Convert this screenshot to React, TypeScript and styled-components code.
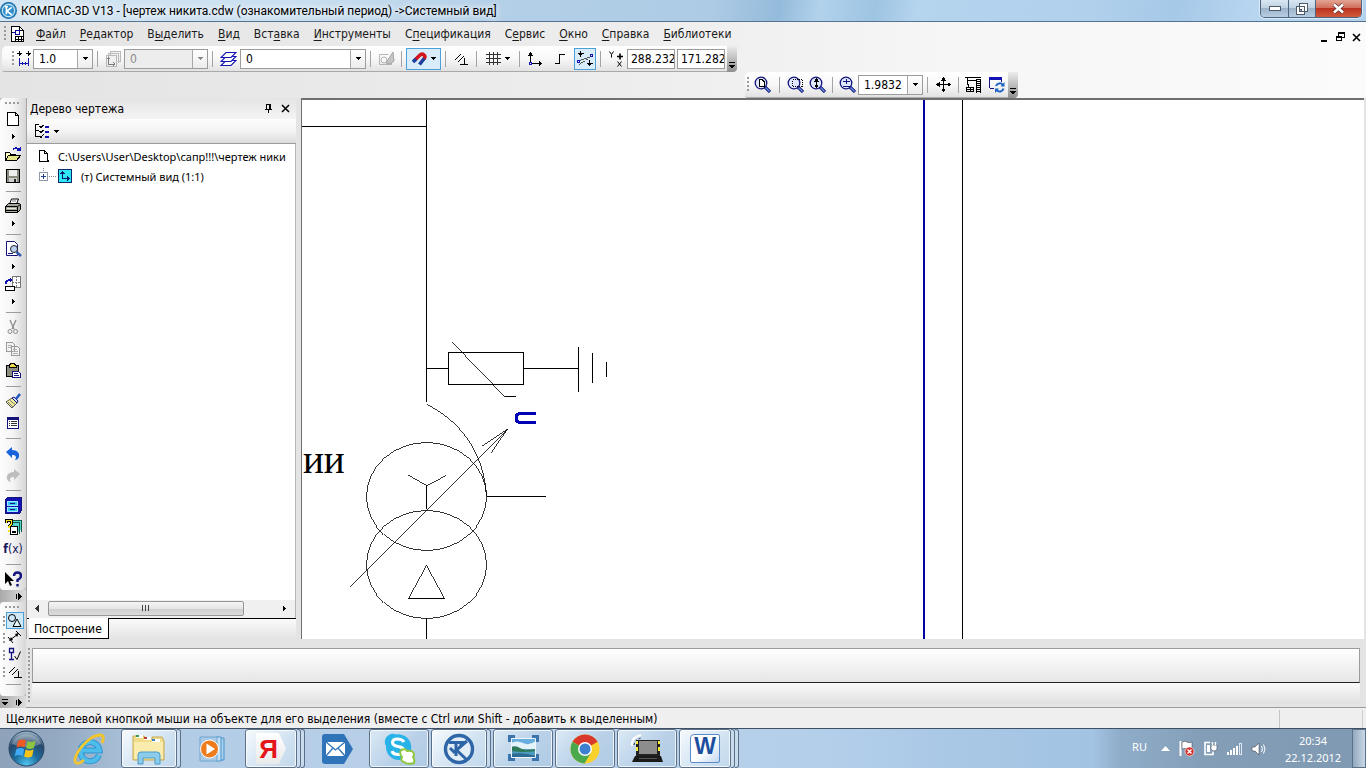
import React from "react";
import styled, { createGlobalStyle, css } from "styled-components";

const UI = 'Roboto, "Noto Sans", sans-serif';
const SMALL = '"Noto Sans", "Open Sans", sans-serif';
const TAHOMA = '"DejaVu Sans Condensed", "DejaVu Sans", sans-serif';

const Global = createGlobalStyle`
  *, *::before, *::after { box-sizing: border-box; }
  html, body { margin: 0; padding: 0; height: 100%; }
  #root { height: 100%; }
  body { font-family: ${UI}; font-size: 12px; color: #000; background: #ebebeb; overflow: hidden; }
  button, input, select { font: inherit; color: inherit; margin: 0; padding: 0; border: 0; background: none; border-radius: 0; }
  svg { display: block; flex: none; }
`;

/* ---------- shell ---------- */

const Shell = styled.div`
  display: flex;
  flex-direction: column;
  min-height: 100vh;
`;

const TitleBar = styled.header`
  display: flex;
  align-items: flex-start;
  height: 22px;
  padding-right: 4px;
  border-bottom: 1px solid #56728f;
  background: linear-gradient(100deg, #d4e6f3 0, #c9dff0 22%, #b4d0e8 36%, #aecbe5 52%, #94bbdb 57%, #b2d2ec 60%, #9dc4e2 64%, #b5d4ee 67%, #b0d0ec 80%, #a6c9e8 86%, #b9d6f0 92%, #b2d1ec 100%);
  > svg { align-self: center; }
`;

const TitleText = styled.h1`
  flex: 1;
  margin: 0 0 0 4px;
  font-size: 12px;
  font-weight: 400;
  line-height: 22px;
  white-space: nowrap;
  text-shadow: 0 0 6px #fff, 0 0 6px #fff;
`;

const CaptionGroup = styled.div`
  display: flex;
  height: 18px;
  border: 1px solid #4d6580;
  border-top: 0;
  border-radius: 0 0 5px 5px;
  overflow: hidden;
  box-shadow: 0 0 0 1px rgba(255, 255, 255, 0.5);
`;

const CaptionButton = styled.button<{ $close?: boolean }>`
  display: grid;
  place-items: center;
  width: ${(p) => (p.$close ? 46 : 27)}px;
  background: ${(p) =>
    p.$close
      ? "linear-gradient(#e3a493 0, #d2705c 45%, #bc3220 50%, #cf5a3c 100%)"
      : "linear-gradient(#d9e6f2 0, #c0d2e3 45%, #9db3c9 50%, #b7cde2 100%)"};
  & + & { border-left: 1px solid #4d6580; }
`;

const CommandArea = styled.div`
  background: linear-gradient(90deg, #e4e4e4 0, #ededed 45%, #f6f6f6 70%, #fbfbfb 100%);
`;

const MenuBar = styled.nav`
  display: flex;
  align-items: center;
  height: 24px;
  padding: 0 4px;
  font-family: ${TAHOMA};
`;

const MenuItem = styled.a`
  margin-left: 14px;
  line-height: 24px;
  color: #1a1a1a;
  text-decoration: none;
  white-space: nowrap;
  &:first-of-type { margin-left: 11px; }
  u { text-underline-offset: 2px; }
`;

const MdiButtons = styled.div`
  display: flex;
  gap: 5px;
  margin-left: auto;
  padding-top: 6px;
`;

const PlainButton = styled.button`
  display: grid;
  place-items: center;
  min-width: 11px;
  height: 12px;
`;

const DocButton = styled.button`
  margin-left: 3px;
`;

/* ---------- toolbars ---------- */

const ToolRow = styled.div<{ $indent: number }>`
  display: flex;
  height: 26px;
  padding-left: ${(p) => p.$indent}px;
`;

const Toolbar = styled.div<{ $pad: number }>`
  display: flex;
  align-items: center;
  padding-left: ${(p) => p.$pad}px;
  border-bottom: 1px solid #a9a9a9;
  border-radius: 5px 0 0 3px;
  background: linear-gradient(#ffffff 0, #f8f8f8 50%, #e2e2e2 100%);
`;

const Grip = styled.i<{ $wide?: boolean; $tall?: boolean }>`
  flex: none;
  align-self: ${(p) => (p.$tall ? "stretch" : "center")};
  width: ${(p) => (p.$wide ? 16 : 2)}px;
  height: ${(p) => (p.$wide ? "2px" : p.$tall ? "auto" : "16px")};
  background: repeating-linear-gradient(${(p) => (p.$wide ? "90deg" : "180deg")}, #9a9a9a 0 2px, transparent 2px 4px);
`;

const ToolButton = styled.button<{ $on?: boolean; $w?: number; $dim?: boolean }>`
  display: flex;
  align-items: center;
  justify-content: center;
  gap: 4px;
  flex: none;
  width: ${(p) => p.$w ?? 22}px;
  height: 22px;
  opacity: ${(p) => (p.$dim ? 0.75 : 1)};
  ${(p) => p.$on && css`border: 1px solid #4ba0d8; background: #d8ecf9;`}
`;

const Sep = styled.span`
  flex: none;
  width: 1px;
  height: 16px;
  margin: 0 4px;
  background: #a4a4a4;
`;

const Combo = styled.label<{ $w: number; $off?: boolean }>`
  display: grid;
  grid-template-columns: 1fr 15px;
  flex: none;
  width: ${(p) => p.$w}px;
  height: 20px;
  border: 1px solid #9c9c9c;
  background: ${(p) => (p.$off ? "#ededed" : "#fff")};
  color: ${(p) => (p.$off ? "#8a8a8a" : "#000")};
  select {
    grid-area: 1 / 1 / 2 / 3;
    min-width: 0;
    padding-left: 5px;
    appearance: none;
    outline: 0;
    font-family: ${TAHOMA};
    opacity: 1;
  }
  span {
    grid-area: 1 / 2 / 2 / 3;
    display: grid;
    place-items: center;
    border-left: 1px solid #a8a8a8;
    background: linear-gradient(#fff, #ececec);
    pointer-events: none;
  }
`;

const Coord = styled.input`
  flex: none;
  width: 48px;
  height: 20px;
  margin-right: 2px;
  padding-left: 3px;
  border: 1px solid #9c9c9c;
  background: #fff;
  font-family: ${TAHOMA};
`;

const EndCap = styled.button`
  display: flex;
  align-items: flex-end;
  justify-content: center;
  align-self: stretch;
  width: 10px;
  padding-bottom: 3px;
  border-radius: 0 0 4px 0;
  background: linear-gradient(#ececec, #8f8f8f);
`;

/* ---------- work area ---------- */

const Work = styled.div`
  display: flex;
  flex: 1;
  min-height: 0;
`;

const Strip = styled.aside`
  display: flex;
  flex-direction: column;
  width: 26px;
  flex: none;
  background: #b9b9b9;
`;

const StripBar = styled.div<{ $grow?: boolean }>`
  display: flex;
  flex-direction: column;
  align-items: center;
  flex: ${(p) => (p.$grow ? 1 : "none")};
  border-radius: 4px 0 4px 4px;
  background: linear-gradient(90deg, #fdfdfd 0, #f4f4f4 50%, #d6d6d6 100%);
`;

const StripGrip = styled.div`
  display: grid;
  place-items: center;
  width: 100%;
  height: 10px;
`;

const StripButton = styled.button<{ $h?: number }>`
  display: grid;
  place-items: center;
  width: 22px;
  height: ${(p) => p.$h ?? 22}px;
`;

const ModeButton = styled.button<{ $on?: boolean }>`
  display: flex;
  align-items: center;
  gap: 1px;
  width: 21px;
  height: 17px;
  i { height: 10px; }
  span {
    display: grid;
    place-items: center;
    width: 18px;
    height: 17px;
    border: 1px solid ${(p) => (p.$on ? "#4ba0d8" : "transparent")};
    background: ${(p) => (p.$on ? "#cfe8f8" : "none")};
  }
`;

const StripSep = styled.div`
  display: grid;
  place-items: center;
  height: 8px;
  &::before { content: ""; width: 15px; height: 1px; background: #9c9c9c; }
`;

const StripCap = styled.button`
  display: flex;
  align-items: center;
  justify-content: flex-end;
  gap: 8px;
  flex: none;
  height: 12px;
  padding-right: 4px;
  background: linear-gradient(90deg, #a9a9a9, #dcdcdc);
`;

const Main = styled.div`
  display: flex;
  flex-direction: column;
  flex: 1;
  min-width: 0;
  background: #e4e4e4;
`;

const Upper = styled.div`
  display: flex;
  flex: 1;
  min-height: 0;
  gap: 5px;
`;

const TreePanel = styled.section`
  display: flex;
  flex-direction: column;
  flex: none;
  width: 270px;
  border-left: 1px solid #a5a5a5;
`;

const TreeHead = styled.div`
  display: flex;
  align-items: center;
  gap: 6px;
  height: 21px;
  padding: 0 5px 0 3px;
  background: linear-gradient(#e4e4e4, #f4f4f4);
  h2 {
    flex: 1;
    margin: 0;
    font-size: 12px;
    font-weight: 400;
    font-family: ${TAHOMA};
  }
`;

const TreeTools = styled.div`
  display: flex;
  align-items: center;
  height: 25px;
  padding-left: 5px;
  border-bottom: 1px solid #9b9b9b;
  background: linear-gradient(#fdfdfd, #f4f4f4 50%, #dcdcdc);
`;

const TreeList = styled.ul`
  flex: 1;
  margin: 0;
  padding: 2px 2px 0 11px;
  border-right: 1px solid #b5b5b5;
  list-style: none;
  background: #fff;
  font-family: ${SMALL};
  font-size: 11px;
`;

const TreeItem = styled.li`
  display: flex;
  align-items: center;
  gap: 9px;
  height: 20px;
  white-space: nowrap;
  overflow: hidden;
`;

const HScroll = styled.div`
  display: flex;
  align-items: center;
  justify-content: space-between;
  height: 18px;
  padding: 0 9px 2px 8px;
  border-right: 1px solid #b5b5b5;
  background: #f0f0f0;
`;

const Thumb = styled.div`
  display: grid;
  place-items: center;
  width: 196px;
  height: 15px;
  margin-right: auto;
  margin-left: 9px;
  border: 1px solid #979797;
  border-radius: 2px;
  background: linear-gradient(#f4f4f4 0, #e6e6e6 50%, #d0d0d0 55%, #dcdcdc 100%);
`;

const TabRow = styled.div`
  display: flex;
  height: 21px;
  padding-left: 2px;
  border-top: 1px solid #000;
  background: linear-gradient(#fafafa, #e4e4e4);
`;

const Tab = styled.button`
  margin-top: -1px;
  padding: 0 6px 0 5px;
  border: solid #000;
  border-width: 0 1px 1px 0;
  background: #fff;
  font-family: ${TAHOMA};
  font-size: 12px;
  line-height: 22px;
`;

const Canvas = styled.main`
  flex: 1;
  min-width: 0;
  margin-right: 2px;
  border: solid #6f6f6f;
  border-width: 2px 0 0 1px;
  background: #fff;
  overflow: hidden;
  position: relative;
`;

const PropPanel = styled.section`
  display: flex;
  gap: 2px;
  height: 69px;
  padding: 9px 6px 3px 2px;
  border-bottom: 1px solid #9c9c9c;
`;

const PropBody = styled.div`
  flex: 1;
`;

const PropBox = styled.div`
  height: 35px;
  border: solid #9c9c9c;
  border-width: 1px 1px 0 1px;
  border-bottom: 1px solid #222;
  background: linear-gradient(#fff, #e6e6e6);
`;

const PropFoot = styled.div`
  height: 21px;
  background: linear-gradient(#fafafa, #e0e0e0);
`;

const StatusBar = styled.footer`
  display: flex;
  height: 20px;
  padding: 2px 3px 0 6px;
  background: #f0eff0;
  font-family: ${TAHOMA};
  line-height: 19px;
  white-space: nowrap;
  p { flex: 1; margin: 0; }
  span { width: 84px; border-left: 1px solid #c4c4c4; border-right: 1px solid #d0d0d0; }
`;

/* ---------- taskbar ---------- */

const Taskbar = styled.footer`
  display: flex;
  gap: 2px;
  height: 40px;
  border-top: 1px solid #3f5064;
  background: linear-gradient(90deg, #8ea2ba 0, #93a8c1 4%, #b3cce5 12%, #bad2ea 40%, #b4cfea 60%, #a9c8e6 70%, #a3c3e3 80%, #8fadc9 82%, #849eb8 88%, #7f99b2 100%);
`;

const StartButton = styled.button`
  width: 57px;
  padding-left: 8px;
`;

const TaskSlot = styled.button<{ $run?: boolean; $active?: boolean }>`
  display: flex;
  width: 60px;
  > span {
    display: grid;
    place-items: center;
    flex: 1;
    height: 39px;
    ${(p) =>
      p.$run &&
      css`
        border: 1px solid #5b7088;
        border-radius: 3px;
        box-shadow: inset 0 0 0 1px rgba(255, 255, 255, 0.75);
        background: ${p.$active
          ? "linear-gradient(135deg, #f6fafd, #d0e2f1 60%, #c1d8ec)"
          : "linear-gradient(135deg, #dbe9f5, #b9d1e8 55%, #b0cbe5)"};
      `}
  }
  > i {
    width: 4px;
    height: 39px;
    border: solid #5b7088;
    border-width: 1px 1px 1px 0;
    border-radius: 0 3px 3px 0;
    background: #c9dcee;
  }
`;

const Tray = styled.div`
  display: flex;
  align-items: center;
  margin-left: auto;
  color: #fff;
`;

const TrayItems = styled.div`
  display: flex;
  align-items: center;
  gap: 8px;
  margin-right: 18px;
`;

const Lang = styled.span`
  margin-right: 6px;
  margin-bottom: 5px;
  font-family: ${SMALL};
  font-size: 11px;
`;

const Clock = styled.time`
  width: 58px;
  margin-right: 10px;
  text-align: center;
  font-family: ${SMALL};
  font-size: 11px;
  line-height: 17px;
`;

const ShowDesktop = styled.button`
  width: 14px;
  height: 39px;
  border: 1px solid #5a7189;
  background: linear-gradient(90deg, #93a9bf, #c9d8e6);
`;

/* ---------- small glyphs ---------- */

type IconProps = { w?: number; h?: number; smooth?: boolean; children: React.ReactNode };
const Icon = ({ w = 16, h = 16, smooth, children }: IconProps) => (
  <svg width={w} height={h} viewBox={`0 0 ${w} ${h}`} fill="none" stroke="#000" shapeRendering={smooth ? "auto" : "crispEdges"} aria-hidden="true">
    {children}
  </svg>
);

const Down = ({ c = "#000" }: { c?: string }) => (
  <Icon w={5} h={3}><path d="M0 0h5L2.500 3z" fill={c} stroke="none" /></Icon>
);
const Right = () => (
  <Icon w={3} h={5}><path d="M0 0v5L3 2.500z" fill="#000" stroke="none" /></Icon>
);
const Left = () => (
  <Icon w={4} h={7}><path d="M4 0v7L0 3.500z" fill="#333" stroke="none" /></Icon>
);
const CapDown = () => (
  <Icon w={6} h={7}><path d="M0 .5h6" /><path d="M0 3h6L3 6.500z" fill="#000" stroke="none" /></Icon>
);
const CapRight = () => (
  <Icon w={6} h={7}><path d="M.5 1v5" /><path d="M2 0v7L6 3.500z" fill="#000" stroke="none" /></Icon>
);

const TitleMark = () => (
  <svg width="17" height="17" viewBox="0 0 32 32" fill="none" aria-hidden="true">
    <circle cx="16" cy="16" r="15" fill="#2f8fcb" stroke="#1f6da5" strokeWidth="2" />
    <circle cx="16" cy="16" r="11.500" stroke="#cfe6f5" strokeWidth="2" />
    <path d="M12 9v14M9 9h6M22 10l-9 7 9 7" stroke="#fff" strokeWidth="3" />
  </svg>
);

const KompasMark = () => (
  <svg width="32" height="32" viewBox="0 0 32 32" fill="none" aria-hidden="true">
    <circle cx="16" cy="16" r="13.500" fill="#e3edf6" stroke="#2e66a8" strokeWidth="3.400" />
    <path d="M6 9.500h16M13 9v14" stroke="#2e66a8" strokeWidth="3" />
    <path d="M24 8L13.500 17 23 26M7 15l5 5" stroke="#2e66a8" strokeWidth="3" />
    <path d="M17.500 9.500v5" stroke="#2e66a8" strokeWidth="2" />
  </svg>
);

const DocIcon = () => (
  <Icon><path d="M2.500 .5h8l4 4v11h-12z" fill="#fff" /><path d="M10.500 .5v4h4" /><path d="M3 6.500h3M6.500 4.500h4v4h-4z" stroke="#0a0aa0" /><path d="M6.500 10.500h8v5h-8zM6 13h9M9.500 10v5M12.500 10v5" /></Icon>
);

/* toolbar */
const StepIcon = () => (
  <Icon><path d="M3.500 0v5M1 2.500h5M12.500 0v5M10 2.500h5" /><path d="M2.500 1.500h2v2h-2zM11.500 1.500h2v2h-2z" fill="#000" stroke="none" /><path d="M3.500 7v8M12.500 7v8M4 12.500h8M6.500 11v3M9.500 11v3" stroke="#1414b4" /></Icon>
);
const ViewsIcon = () => (
  <Icon><path d="M5.500 3.500v-3h10v10h-3M3.500 5.500v-3h10v9M1.500 4.500h10v11h-10z" stroke="#a5a5a5" fill="#eee" /><path d="M3.500 7v6h6M1.500 8.500l2-2 2 2M8 11l2 2-2 2" stroke="#555" /></Icon>
);
const LayersIcon = () => (
  <Icon w={17} smooth>
    <g stroke="#1414b4" strokeWidth="1.100" fill="#fff">
      <path d="M6 9.500h10l-5 5H1z" /><path d="M6 5.500h10l-5 5H1z" /><path d="M6 1.500h10l-5 5H1z" />
    </g>
  </Icon>
);
const SketchIcon = () => (
  <Icon w={17} smooth><path d="M1.500 3.500h9M1.500 3.500v10h12v-3" stroke="#a0a0a0" /><circle cx="6" cy="9" r="3" stroke="#a0a0a0" /><path d="M15 1l1 9-4 3-4-1z" fill="#b5b5b5" stroke="#8a8a8a" /></Icon>
);
const MagnetIcon = () => (
  <Icon smooth>
    <path d="M3.500 9.500l5-5c3-3 7 0 4.500 3.500" stroke="#d2161b" strokeWidth="3.600" />
    <path d="M13.200 7.500L8.500 13.500" stroke="#1c3f9f" strokeWidth="3.600" /><path d="M5 8l-3 3" stroke="#1c3f9f" strokeWidth="3.600" />
  </Icon>
);
const ParallelIcon = () => (
  <Icon w={14} h={14} smooth><path d="M1 8l6-6M4 10l6-6" /><path d="M6 12.500h8M10.500 6v6" shapeRendering="crispEdges" /></Icon>
);
const GridIcon = () => (
  <Icon w={15} h={13}><path d="M0 2.500h15M0 6.500h15M0 10.500h15M3.500 0v13M7.500 0v13M11.500 0v13" stroke="#333" /></Icon>
);
const AxesIcon = () => (
  <Icon><path d="M3.500 2v10M4 12.500h10" /><path d="M1 4.500L3.500 1 6 4.500zM12 10l3.500 2.500L12 15z" fill="#000" stroke="none" /><path d="M2.500 11.500h2v2h-2z" stroke="#1414b4" /></Icon>
);
const OrthoIcon = () => (
  <Icon w={12} h={12}><path d="M1 10.500h4.500v-9H11" /></Icon>
);
const RoundIcon = () => (
  <Icon w={18}><path d="M4.500 0v6M2 2.500h6M13.500 9v6M11 12.500h6" /><path d="M3.500 2.500h2v1h-2zM12.500 12.500h2v1h-2z" fill="#000" /><path d="M2.500 9.500L15 5.500" stroke="#333" strokeWidth=".8" /><path d="M3 13.500L12 8" stroke="#333" strokeWidth=".8" strokeDasharray="3 1" /><path d="M14.500 3.500h2v2h-2zM1.500 9.500h2v2h-2z" stroke="#1414b4" /></Icon>
);
const XYIcon = () => (
  <Icon w={17} smooth><path d="M1.500 .5l2 3 2-3M3.500 3.500v3M9.500 10.500l4 5M13.500 10.500l-4 5" /><path d="M9 5.500h6M12 2.500v6" strokeWidth="1.600" /></Icon>
);

const Lens = ({ children }: { children: React.ReactNode }) => (
  <Icon w={17} h={17} smooth>
    <circle cx="7" cy="7" r="5.800" fill="#dfe9fb" stroke="#14147c" strokeWidth="1.300" />
    <path d="M11 11l5 5" stroke="#14147c" strokeWidth="3.200" /><path d="M11.500 11.500l4 4" stroke="#5f8fe0" strokeWidth="1.400" />
    <g shapeRendering="crispEdges">{children}</g>
  </Icon>
);
const ZoomPage = () => <Lens><path d="M5.500 3.500h2.500l2 2v4.500h-4.500z" fill="#fff" /></Lens>;
const ZoomArea = () => <Lens><path d="M5.500 3.500h10v7h-10z" strokeDasharray="1 1" /></Lens>;
const ZoomDyn = () => <Lens><path d="M7.500 3v9" /><path d="M5 5.500L7.500 2 10 5.500zM5 8.500L7.500 12 10 8.500z" fill="#000" stroke="none" /></Lens>;
const ZoomPM = () => <Lens><path d="M4 5.500h7M7.500 3v5M4 10.500h7" stroke="#14147c" /></Lens>;
const PanIcon = () => (
  <Icon w={15} h={15}><path d="M7.500 2v11M2 7.500h11" /><path d="M5 3.500L7.500 0 10 3.500zM5 11.500L7.500 15 10 11.500zM3.500 5L0 7.500 3.500 10zM11.500 5L15 7.500 11.500 10z" fill="#000" stroke="none" /></Icon>
);
const CraneIcon = () => (
  <Icon w={17} h={17}><path d="M0 1.500h16M2.500 2v6M3 4.500h8" /><path d="M11.500 2.500v14M15.500 2.500v14M1.500 11.500h7v4h-7zM5 11v5M1 13.500h8M1.500 8.500h2v2" /><path d="M13.500 3v14" strokeWidth="3" strokeDasharray="1 1" /></Icon>
);
const RefreshIcon = () => (
  <Icon w={17} h={17} smooth><path d="M1.500 12V1.500h12V6M1.500 12H6" stroke="#14147c" shapeRendering="crispEdges" /><path d="M1 1h13v3H1z" fill="#1414b4" stroke="none" /><path d="M8 10a4 4 0 0 1 7-1M15.500 12.500a4 4 0 0 1-7 1.500" stroke="#1d63c4" strokeWidth="2" /><path d="M16.500 6v4.500h-4zM7 17v-4.500h4z" fill="#1d63c4" stroke="none" /></Icon>
);

/* side strip */
const NewIcon = () => <Icon w={15}><path d="M1.500 1.500h8l3 3v10h-11z" fill="#fff" /><path d="M9.500 1.500v3h3" /></Icon>;
const OpenIcon = () => (
  <Icon><path d="M.5 14.500v-8h4l1 1.500h5v2" fill="#ffffb8" /><path d="M.5 14.500l3-5h12l-4 5z" fill="#e6e58a" /><path d="M8 3.500q3-3 6 .5" stroke="#1414b4" strokeWidth="1.600" /><path d="M11.500 4.500h4v-4z" fill="#1414b4" stroke="none" /></Icon>
);
const SaveIcon = () => (
  <Icon><path d="M1.500 1.500h13v13h-13z" fill="#8b8b80" /><path d="M4 2h8v6H4z" fill="#eee" stroke="none" /><path d="M4 10h8v4H4z" fill="#cfcfcf" stroke="none" /><path d="M9 11h2v3H9z" fill="#222" stroke="none" /></Icon>
);
const PrintIcon = () => (
  <Icon smooth><path d="M4.500 6l2-5h7l-2 5" fill="#fff" /><path d="M.5 8.500l3-3h11l1 1v5l-3 3h-12z" fill="#a8a89c" /><path d="M.5 8.500h12l3-2M12.500 8.500v6M1 12.500h11" /><path d="M7 3h4" stroke="#777" /><path d="M2 10.500h9" stroke="#e8e8d8" /></Icon>
);
const PreviewIcon = () => (
  <Icon w={17} smooth><path d="M1.500 .5h8l3 3v11h-11z" fill="#fff" stroke="#14147c" /><circle cx="9" cy="8" r="3.500" fill="#bcd2f5" stroke="#222" /><path d="M11.500 11l4.500 4" stroke="#2f57b0" strokeWidth="2.500" /><path d="M3 12.500h5" stroke="#14147c" /></Icon>
);
const ConvertIcon = () => (
  <Icon w={17}><path d="M7.500 .5h8v11h-8z" fill="#fff" stroke="#777" /><path d="M11.500 0v12M7 6.500h9" stroke="#777" strokeDasharray="2 1" /><path d="M.5 10.500h9v4h-9z" fill="#fff" /><path d="M1 8q0-4 4-4" stroke="#1414b4" strokeWidth="2" /><path d="M4.500 1v6l3.500-3z" fill="#1414b4" stroke="none" /></Icon>
);
const CutIcon = () => (
  <Icon smooth><path d="M5 1l4 9M11 1L7 10" stroke="#8b8b8b" strokeWidth="1.300" /><circle cx="5" cy="12.500" r="2" stroke="#8b8b8b" /><circle cx="10.500" cy="12.500" r="2" stroke="#8b8b8b" /></Icon>
);
const CopyIcon = () => (
  <Icon><path d="M1.500 1.500h6l2 2v7h-8zM6.500 5.500h6l2 2v7h-8z" stroke="#9a9a9a" fill="#f2f2f2" /><path d="M3 4.500h4M3 6.500h3M8 8.500h4M8 10.500h5M8 12.500h5" stroke="#b0b0b0" /></Icon>
);
const PasteIcon = () => (
  <Icon><path d="M1.500 2.500h12v11h-12z" fill="#8d8d80" /><path d="M4 4.500V2.500l2-2h3l2 2v2z" fill="#f2dc4a" /><path d="M7.500 8.500h6l2 2v4h-8z" fill="#fff" stroke="#14147c" /><path d="M9 10.500h4M9 12.500h5" stroke="#14147c" /></Icon>
);
const BrushIcon = () => (
  <Icon smooth><path d="M1 9l6-4 5 5-5 5z" fill="#f1ee9a" stroke="#555" /><path d="M3 9l5 5M5 7.500l5 4" stroke="#777" /><path d="M7 5l2-1 4 4-1 2z" fill="#cfe0f8" stroke="#14147c" /><path d="M11 6l4-5" stroke="#2257c0" strokeWidth="2.600" /></Icon>
);
const TableIcon = () => (
  <Icon w={14} h={14}><path d="M1.500 1.500h11v11h-11z" fill="#fff" stroke="#14147c" /><path d="M1 2.500h12" stroke="#14147c" strokeWidth="2" /><path d="M3 5.500h1M5 5.500h6M3 7.500h1M5 7.500h6M3 9.500h1M5 9.500h6" stroke="#333" /></Icon>
);
const UndoIcon = () => (
  <Icon w={14} h={15} smooth><path d="M0 6l6-5v3c5 0 8 3 7 7-1 2-2 3-4 3 2-3 1-5-3-5v3z" fill="#1763dc" stroke="none" /></Icon>
);
const RedoIcon = () => (
  <Icon w={14} h={15} smooth><path d="M14 6L8 1v3C3 4 0 7 1 11c1 2 2 3 4 3-2-3-1-5 3-5v3z" fill="#bdbdbd" stroke="none" /></Icon>
);
const CabinetIcon = () => (
  <Icon w={17} h={17}><path d="M.5 2.500l2-2h14v13l-2 3h-14z" fill="#1414b4" stroke="#14147c" /><path d="M2.500 4.500h10v4h-10zM2.500 10.500h10v4h-10z" fill="#35c8ee" stroke="#9feaff" /><path d="M5 6.500h5M5 12.500h5" stroke="#14147c" /></Icon>
);
const ParamIcon = () => (
  <Icon w={17} h={17}><path d="M6.500 1.500h10v11M4.500 3.500h10v11" fill="#57d5d5" stroke="#14553f" /><path d="M5.500 7.500h7v8h-7zM7 13h4" fill="#fff" strokeWidth="1.500" /><path d="M1.500 4V1.500h5V5L4 7.500V9M4 11v2" stroke="#000" strokeWidth="3" /><path d="M1.500 4V1.500h5V5L4 7.500V9M4 11v2" stroke="#f6e51d" strokeWidth="1.500" /></Icon>
);
const HelpIcon = () => (
  <Icon w={18} h={17} smooth><path d="M1 1v12l3-3 2 5 2-1-2-4h4z" fill="#000" stroke="none" /><path d="M10 5q0-3.500 3.500-3.500T17 5q0 2-3.500 4v2M13.500 13v2.500" stroke="#14147c" strokeWidth="2.400" /></Icon>
);
const FxLabel = styled.span`
  font-family: ${TAHOMA};
  font-size: 12px;
  line-height: 16px;
  color: #14145c;
  b { font-weight: 700; }
`;
const GeomIcon = () => <Icon w={15} h={15} smooth><circle cx="5" cy="5" r="3.500" /><path d="M10 6l4 7.500H6z" fill="#e6f3fc" /></Icon>;
const DimIcon = () => <Icon w={15} h={15} smooth><path d="M3 10l8-6M1 7l5 6M9 1l5 5" /><path d="M2 11l2-4 2 3zM12 3L8 4l2 3z" fill="#000" stroke="none" /></Icon>;
const NoteIcon = () => <Icon w={15} h={15} smooth><path d="M2.500 1.500h4v4h-4zM4.500 6v6M2 12.500h5" stroke="#14147c" strokeWidth="1.300" /><path d="M7.500 9l2.500 3.500 3.500-8" /></Icon>;

const modes: [string, React.ReactNode][] = [
  ["Геометрия", <GeomIcon />],
  ["Размеры", <DimIcon />],
  ["Обозначения", <NoteIcon />],
  ["Параметризация", <ParallelIcon />],
];

/* ---------- data ---------- */

const menu: [string, string, string][] = [
  ["", "Ф", "айл"],
  ["", "Р", "едактор"],
  ["В", "ы", "делить"],
  ["", "В", "ид"],
  ["Вст", "а", "вка"],
  ["", "И", "нструменты"],
  ["С", "п", "ецификация"],
  ["С", "е", "рвис"],
  ["", "О", "кно"],
  ["", "С", "правка"],
  ["", "Б", "иблиотеки"],
];

type StripEntry = { kind: "sep" } | { kind: "more"; label: string } | { kind: "tool"; label: string; icon: React.ReactNode };
const tool = (label: string, icon: React.ReactNode): StripEntry => ({ kind: "tool", label, icon });
const more = (label: string): StripEntry => ({ kind: "more", label });
const sep: StripEntry = { kind: "sep" };

const strip: StripEntry[] = [
  tool("Создать", <NewIcon />), more("Создать: варианты"),
  tool("Открыть", <OpenIcon />), tool("Сохранить", <SaveIcon />), sep,
  tool("Печать", <PrintIcon />), more("Печать: варианты"), sep,
  tool("Просмотр", <PreviewIcon />), more("Просмотр: варианты"),
  tool("Преобразовать", <ConvertIcon />), more("Преобразовать: варианты"), sep,
  tool("Вырезать", <CutIcon />), tool("Копировать", <CopyIcon />), tool("Вставить", <PasteIcon />), sep,
  tool("Копировать свойства", <BrushIcon />), tool("Свойства", <TableIcon />), sep,
  tool("Отменить", <UndoIcon />), tool("Повторить", <RedoIcon />), sep,
  tool("Менеджер библиотек", <CabinetIcon />), tool("Менеджер шаблонов", <ParamIcon />),
  tool("Переменные", <FxLabel><b>f</b>(x)</FxLabel>), sep,
  tool("Справка", <HelpIcon />),
];

const Select = ({ label, value, w, off }: { label: string; value: string; w: number; off?: boolean }) => (
  <Combo $w={w} $off={off}>
    <select aria-label={label} disabled={off} defaultValue={value}>
      <option>{value}</option>
    </select>
    <span><Down c={off ? "#888" : "#000"} /></span>
  </Combo>
);

/* ---------- drawing ---------- */

const Sheet = styled.svg`
  position: absolute;
  inset: 0;
  width: 100%;
  height: 100%;
`;

const Scheme = () => (
  <Sheet role="img" aria-label="Схема трансформатора">
    <g transform="translate(-302 -100)" stroke="#000" fill="none" shapeRendering="crispEdges">
      <path d="M426.500 100V402M302 126.500H426M426 368.500H448M448.500 352.500h75v32h-75zM523 368.500H578M578.500 347V392M592.500 353V383M606.500 362V377M505 396.500H516" />
      <g strokeWidth=".8">
        <path d="M452.500 341.500L505.500 396.500" />
        <path d="M427 404.500C460 421 484 452 486.500 496" />
        <ellipse cx="426.500" cy="496.500" rx="60" ry="54" />
        <ellipse cx="426.500" cy="564.500" rx="60" ry="54" />
        <path d="M350 586.500L507.500 429M482 446L507.500 429 491 453" />
        <path d="M408 475L426.500 485.500 446 475" />
        <path d="M426.500 564.500L408 598.500M426.500 564.500L445 598.500" />
      </g>
      <path d="M487 496.500H546M426.500 485V509M408 598.500H445M426.500 618V2000" />
      <path d="M536 413.500H521q-5 0-5 4.500t5 4.500H536" stroke="#0000b4" strokeWidth="3" />
      <path d="M924 100V2000" stroke="#0000a0" strokeWidth="2" />
      <path d="M962.500 100V2000" />
      <text x="303" y="473" fontFamily='"Liberation Serif", serif' fontSize="39" fill="#000" stroke="none">ии</text>
    </g>
  </Sheet>
);

/* ---------- taskbar pictures ---------- */

const StartOrb = () => (
  <svg width="37" height="37" viewBox="0 0 37 37" aria-hidden="true">
    <defs>
      <radialGradient id="orb" cx=".5" cy=".95" r=".9"><stop offset="0" stopColor="#4fc4ee" /><stop offset=".4" stopColor="#1d6d9f" /><stop offset=".75" stopColor="#27486b" /><stop offset="1" stopColor="#8fa9bd" /></radialGradient>
    </defs>
    <circle cx="18.500" cy="18.500" r="17.500" fill="url(#orb)" stroke="#2c4763" />
    <path d="M4 14a15 13 0 0 1 29 0q-14 6-29 0z" fill="#fff" opacity=".28" />
    <path d="M10 11q4-2.500 8-.5l-1.500 7q-4-2-8 .3z" fill="#ee5a24" />
    <path d="M19.500 11q4 2 8-.3l-1.500 7q-4 2.200-8 .3z" fill="#8cc63f" />
    <path d="M8.200 19.300q4-2.200 8-.3l-1.500 7q-4-2-8 .3z" fill="#3fa9f5" />
    <path d="M17.600 19.500q4 2 8-.3l-1.500 7q-4 2.200-8 .3z" fill="#fcc419" />
  </svg>
);
const IeIcon = () => (
  <svg width="34" height="34" viewBox="0 0 34 34" fill="none" aria-hidden="true">
    <path d="M27 23a9.500 9.500 0 1 1 .5-4.500H10" stroke="#2b93cf" strokeWidth="6" />
    <path d="M27 23a9.500 9.500 0 1 1 .5-4.500H10" stroke="#4fbdec" strokeWidth="4.200" />
    <path d="M12 28C5 34 1 31 4 24 8 14 20 3 28 3c4 0 4 4 2 8" stroke="#f2c52e" strokeWidth="2.800" />
  </svg>
);
const FolderIcon = () => (
  <svg width="34" height="32" viewBox="0 0 34 32" aria-hidden="true">
    <path d="M1 3h11l2 3h6V4h10l2 4v19H1z" fill="#f1dc8a" stroke="#c7a950" />
    <path d="M4 2h7v3H4zM12 4h7v3h-7zM20 6h8v3h-8z" fill="#fff" /><path d="M4 2h3v2H4z" fill="#3a9a4c" /><path d="M12 4h3v2h-3z" fill="#c43d2e" /><path d="M20 6h3v2h-3z" fill="#3b7dc4" />
    <path d="M2 9h29v17H2z" fill="#f9ecae" />
    <path d="M6 31v-9q0-3 3-3h16q3 0 3 3v9h-5v-6H11v6z" fill="#8ccbea" stroke="#4a9cc8" />
  </svg>
);
const PlayerIcon = () => (
  <svg width="28" height="28" viewBox="0 0 28 28" aria-hidden="true">
    <path d="M20 3h5v22h-5z" fill="#a8d1ee" stroke="#4b94c8" /><path d="M17 2h5v24h-5z" fill="#c3e0f4" stroke="#4b94c8" />
    <path d="M1 2h17v24H1z" fill="#a9c9e4" stroke="#6ea6cf" />
    <circle cx="10.500" cy="14" r="9" fill="#ee7b1c" stroke="#fff" /><path d="M7.500 8.500v11l8.500-5.500z" fill="#fff" />
  </svg>
);
const YaMark = styled.b`
  font-family: "Liberation Sans", sans-serif;
  font-size: 26px;
  line-height: 30px;
  color: #e4161a;
`;
const YaPlate = styled.em`
  display: grid;
  place-items: center;
  width: 30px;
  height: 31px;
  padding-right: 5px;
  font-style: normal;
  background: linear-gradient(#fff, #e9e9e9);
  clip-path: polygon(0 0, 76% 0, 100% 50%, 76% 100%, 0 100%);
`;
const MailIcon = () => (
  <svg width="33" height="32" viewBox="0 0 33 32" fill="none" aria-hidden="true">
    <path d="M1 4q0-3 3-3h19l9 15-9 15H4q-3 0-3-3z" fill="#2f74b8" />
    <path d="M5 9h19v14H5z" fill="#fff" /><path d="M5 9l9.500 8L24 9M5 23l7-8M24 23l-7-8" stroke="#2f74b8" strokeWidth="1.300" />
  </svg>
);
const SkypeIcon = () => (
  <svg width="33" height="33" viewBox="0 0 33 33" fill="none" aria-hidden="true">
    <path d="M2 8A8 8 0 0 1 13 2.500 13 13 0 0 1 28 18a8 8 0 0 1-11 10A13 13 0 0 1 3 14 8 8 0 0 1 2 8z" fill="#28b3e8" />
    <path d="M21 10q-2-3-6.500-3-5 0-5 3.500 0 3 5.500 4 6 1 6 4.500 0 3.500-5.500 3.500T9 19" stroke="#fff" strokeWidth="3" />
    <path d="M18 18q5-2 6 1 7-1 7 4l-1 2q2 2 1 6-7 2-10-1-4-1-2-5-3-3-1-7z" fill="#fff" stroke="#8dc63f" strokeWidth="2" />
  </svg>
);
const PhotoIcon = () => (
  <svg width="31" height="27" viewBox="0 0 31 27" aria-hidden="true">
    <path d="M3 3h25v20H3z" fill="#6aaede" />
    <path d="M3 8q6-3 12 0t13-2v8H3z" fill="#e4f2fa" />
    <path d="M3 12q5-2 9 1t16 1v4H3z" fill="#2f7a5a" />
    <path d="M3 16q12 2 25 0v7H3z" fill="#4d9cc0" /><path d="M3 19q12-2 25 2v2H3z" fill="#2c6a92" />
    <path d="M3.500 3.500h24v19h-24z" fill="none" stroke="#eef6fb" />
    <path d="M0 0h7v3H3v4H0zM24 0h7v7h-3V3h-4zM0 19h3v4h4v3H0zM28 19h3v7h-7v-3h4z" fill="#3a73ad" />
  </svg>
);
const ChromeIcon = () => (
  <svg width="30" height="30" viewBox="0 0 30 30" aria-hidden="true">
    <circle cx="15" cy="15" r="14.500" fill="#f9d12d" />
    <path d="M15 15L2.500 7.700A14.500 14.500 0 0 1 27.600 7.700z" fill="#d9382d" />
    <path d="M15 15l-12.500-7.300A14.500 14.500 0 0 0 14.500 29.500L21 18.500z" fill="#4aa94c" />
    <circle cx="15" cy="15" r="7" fill="#fff" /><circle cx="15" cy="15" r="5.500" fill="#3e7fcf" />
  </svg>
);
const LaptopIcon = () => (
  <svg width="34" height="30" viewBox="0 0 34 30" aria-hidden="true">
    <path d="M6 6h24v16H6z" fill="#222" /><path d="M9 7h18v13H9z" fill="#8d8d8d" /><path d="M6 7h2v3H6zM6 13h2v4H6zM28 7h2v3h-2zM28 13h2v4h-2z" fill="#f5ec3a" />
    <path d="M5 22h26l2 6H2z" fill="#1a1a1a" /><path d="M9 24.500h18" stroke="#555" /><path d="M2 12q-1-9 9-11" stroke="#fff" strokeWidth="2" fill="none" /><path d="M4 11q1-6 8-7" stroke="#222" strokeDasharray="2 2" fill="none" />
  </svg>
);
const WordMark = styled.b`
  display: block;
  width: 30px;
  height: 29px;
  border: 1px solid #5b8cc9;
  border-radius: 4px 2px 2px 2px;
  background: linear-gradient(135deg, #fff 50%, #c3d8f0);
  font-family: "Liberation Sans", sans-serif;
  font-size: 23px;
  line-height: 22px;
  color: #1d4f9e;
`;

type Task = { label: string; icon: React.ReactNode; run?: boolean; active?: boolean; stack?: number };
const tasks: Task[] = [
  { label: "Internet Explorer", icon: <IeIcon /> },
  { label: "Проводник", icon: <FolderIcon />, run: true, active: true, stack: 1 },
  { label: "Проигрыватель", icon: <PlayerIcon /> },
  { label: "Яндекс", icon: <YaPlate><YaMark>Я</YaMark></YaPlate>, run: true, active: true, stack: 2 },
  { label: "Почта", icon: <MailIcon /> },
  { label: "Skype", icon: <SkypeIcon />, run: true },
  { label: "КОМПАС-3D", icon: <KompasMark />, run: true, active: true, stack: 1 },
  { label: "Просмотр рисунков", icon: <PhotoIcon />, run: true },
  { label: "Chrome", icon: <ChromeIcon />, run: true },
  { label: "Компьютер", icon: <LaptopIcon />, run: true },
  { label: "Word", icon: <WordMark>W</WordMark>, run: true, active: true, stack: 2 },
];

export default function App() {
  return (
    <Shell>
      <Global />
      <TitleBar>
        <TitleMark />
        <TitleText>КОМПАС-3D V13 - [чертеж никита.cdw (ознакомительный период) -&gt;Системный вид]</TitleText>
        <CaptionGroup>
          <CaptionButton aria-label="Свернуть"><Icon w={12} h={5}><path d="M.5 .5h11v4H.5z" fill="#fff" stroke="#4d5b6b" /></Icon></CaptionButton>
          <CaptionButton aria-label="Восстановить"><Icon w={12} h={12}><path d="M3.500 .5h8v8h-8zM.5 3.500h8v8h-8z" fill="#fff" stroke="#4d5b6b" /><path d="M3.500 6.500h2v2h-2z" fill="#9db3c9" stroke="#4d5b6b" /></Icon></CaptionButton>
          <CaptionButton $close aria-label="Закрыть"><Icon w={13} h={11} smooth><path d="M2 1.500l9 8M11 1.500l-9 8" stroke="#5a3030" strokeWidth="4" /><path d="M2 1.500l9 8M11 1.500l-9 8" stroke="#fff" strokeWidth="2.600" /></Icon></CaptionButton>
        </CaptionGroup>
      </TitleBar>

      <CommandArea>
        <MenuBar>
          <Grip />
          <DocButton aria-label="Документ"><DocIcon /></DocButton>
          {menu.map(([a, k, b]) => (
            <MenuItem href="#" key={a + k + b}>{a}<u>{k}</u>{b}</MenuItem>
          ))}
          <MdiButtons>
            <PlainButton aria-label="Свернуть документ"><Icon w={10} h={10}><path d="M1 9h6" strokeWidth="2" /></Icon></PlainButton>
            <PlainButton aria-label="Восстановить документ"><Icon w={10} h={10}><path d="M2.500 4V1h6v4.500H6M.5 4.500h5v4h-5z" /><path d="M2 1h7M0 5h6" strokeWidth="2" /></Icon></PlainButton>
            <PlainButton aria-label="Закрыть документ"><Icon w={9} h={9} smooth><path d="M1 1l7 7M8 1L1 8" strokeWidth="1.600" /></Icon></PlainButton>
          </MdiButtons>
        </MenuBar>

        <ToolRow $indent={2}>
          <Toolbar $pad={10}>
            <Grip />
            <ToolButton $w={19} aria-label="Шаг"><StepIcon /></ToolButton>
            <Select label="Текущий шаг" value="1.0" w={60} />
            <Sep />
            <ToolButton $dim aria-label="Состояния видов"><ViewsIcon /></ToolButton>
            <Select label="Вид" value="0" w={84} off />
            <Sep />
            <ToolButton $w={23} aria-label="Слои"><LayersIcon /></ToolButton>
            <Select label="Слой" value="0" w={126} />
            <Sep />
            <ToolButton aria-label="Эскиз" $dim><SketchIcon /></ToolButton>
            <Sep />
            <ToolButton $on $w={35} aria-label="Привязки"><MagnetIcon /><Down /></ToolButton>
            <Sep />
            <ToolButton aria-label="Ограничения"><ParallelIcon /></ToolButton>
            <Sep />
            <ToolButton $w={34} aria-label="Сетка"><GridIcon /><Down /></ToolButton>
            <Sep />
            <ToolButton aria-label="Локальная СК"><AxesIcon /></ToolButton>
            <ToolButton $w={28} aria-label="Ортогональное черчение"><OrthoIcon /></ToolButton>
            <ToolButton $on aria-label="Округление"><RoundIcon /></ToolButton>
            <Sep />
            <ToolButton aria-label="Координаты"><XYIcon /></ToolButton>
            <Coord aria-label="X" defaultValue="288.232" />
            <Coord aria-label="Y" defaultValue="171.282" />
          </Toolbar>
          <EndCap aria-label="Параметры панели"><CapDown /></EndCap>
        </ToolRow>

        <ToolRow $indent={745}>
          <Toolbar $pad={2}>
            <Grip />
            <ToolButton $w={26} aria-label="Показать всё"><ZoomPage /></ToolButton>
            <Sep />
            <ToolButton aria-label="Увеличить рамкой"><ZoomArea /></ToolButton>
            <ToolButton aria-label="Изменить масштаб"><ZoomDyn /></ToolButton>
            <Sep />
            <ToolButton $w={21} aria-label="Приблизить"><ZoomPM /></ToolButton>
            <Select label="Масштаб" value="1.9832" w={65} />
            <Sep />
            <ToolButton aria-label="Сдвинуть"><PanIcon /></ToolButton>
            <Sep />
            <ToolButton $w={21} aria-label="Перестроить"><CraneIcon /></ToolButton>
            <ToolButton $w={24} aria-label="Обновить"><RefreshIcon /></ToolButton>
          </Toolbar>
          <EndCap aria-label="Параметры панели вида"><CapDown /></EndCap>
        </ToolRow>
      </CommandArea>

      <Work>
        <Strip>
          <StripBar>
            <StripGrip><Grip $wide /></StripGrip>
            {strip.map((e, i) =>
              e.kind === "sep" ? (
                <StripSep key={i} />
              ) : e.kind === "more" ? (
                <StripButton key={i} $h={13} aria-label={e.label}><Right /></StripButton>
              ) : (
                <StripButton key={i} aria-label={e.label}>{e.icon}</StripButton>
              )
            )}
          </StripBar>
          <StripCap aria-label="Ещё"><CapRight /></StripCap>
          <StripBar $grow>
            <StripGrip><Grip $wide /></StripGrip>
            {modes.map(([label, icon], i) => (
              <ModeButton key={label} $on={i === 0} aria-label={label}><Grip /><span>{icon}</span></ModeButton>
            ))}
            <StripSep />
          </StripBar>
          <StripCap aria-label="Ещё панели"><CapDown /><CapRight /></StripCap>
        </Strip>

        <Main>
          <Upper>
            <TreePanel>
              <TreeHead>
                <h2>Дерево чертежа</h2>
                <PlainButton aria-label="Закрепить"><Icon w={9} h={9}><path d="M2.500 5V.5h4V5M1 5.500h7M4.500 6v3M5.500 1v4" /></Icon></PlainButton>
                <PlainButton aria-label="Закрыть дерево"><Icon w={9} h={9} smooth><path d="M1 1l7 7M8 1L1 8" strokeWidth="1.500" /></Icon></PlainButton>
              </TreeHead>
              <TreeTools>
                <ToolButton $w={28} aria-label="Состав дерева">
                  <Icon w={16} h={14}><path d="M5 .5H1.500v12H5M2 6.500h3M5.500 2l1.500 1.500L9.500 1M5.500 7L7 8.500 9.500 6M5.500 12l1.500 1.500 2.500-3" /><path d="M11 2.500h4M11 7.500h4M11 12.500h4" stroke="#1414b4" strokeWidth="2" /></Icon>
                  <Down />
                </ToolButton>
              </TreeTools>
              <TreeList>
                <TreeItem>
                  <Icon w={11} h={13}><path d="M1.500 .5h5l3 3v8h-8z" fill="#fff" strokeWidth="1" /><path d="M6.500 .5v3h3M5 11.500h5v-2" strokeWidth="1.500" /></Icon>
                  C:\Users\User\Desktop\сапр!!!\чертеж ники
                </TreeItem>
                <TreeItem>
                  <Icon w={34} h={16}>
                    <path d="M5.500 0v3M11 8.500h8" stroke="#888" strokeDasharray="1 1" />
                    <path d="M1.500 4.500h8v8h-8z" fill="#fff" stroke="#8f9aa8" /><path d="M3 8.500h5M5.500 6v5" stroke="#1f3f8f" />
                    <path d="M20.500 1.500h13v13h-13z" fill="#2ee6f6" stroke="#0c2a6a" /><path d="M24.500 4v6.500H31M22.500 6l2-2 2 2M29 8.500l2 2-2 2" stroke="#0a1a6a" />
                  </Icon>
                  (т) Системный вид (1:1)
                </TreeItem>
              </TreeList>
              <HScroll>
                <Left />
                <Thumb><Icon w={8} h={6}><path d="M.5 0v6M3.500 0v6M6.500 0v6" stroke="#444" /></Icon></Thumb>
                <Right />
              </HScroll>
              <TabRow><Tab>Построение</Tab></TabRow>
            </TreePanel>
            <Canvas><Scheme /></Canvas>
          </Upper>
          <PropPanel>
            <Grip $tall />
            <PropBody>
              <PropBox />
              <PropFoot />
            </PropBody>
          </PropPanel>
        </Main>
      </Work>

      <StatusBar>
        <p>Щелкните левой кнопкой мыши на объекте для его выделения (вместе с Ctrl или Shift - добавить к выделенным)</p>
        <span />
      </StatusBar>

      <Taskbar>
        <StartButton aria-label="Пуск"><StartOrb /></StartButton>
        {tasks.map((t) => (
          <TaskSlot key={t.label} aria-label={t.label} $run={t.run} $active={t.active}>
            <span>{t.icon}</span>
            {Array.from({ length: t.stack ?? 0 }, (_, i) => <i key={i} />)}
          </TaskSlot>
        ))}
        <Tray>
          <TrayItems>
            <Lang>RU</Lang>
            <Icon w={9} h={5} smooth><path d="M4.500 0L9 5H0z" fill="#fff" stroke="none" /></Icon>
            <Icon w={17} h={17} smooth><path d="M2.500 1v15" stroke="#fff" strokeWidth="2" /><path d="M4 2q3-1.500 5 0t5 0v7q-3 1-5 0t-5 0z" fill="#fff" stroke="#445" strokeWidth=".6" /><circle cx="11.500" cy="11.500" r="4.500" fill="#d2302a" stroke="#fff" strokeWidth=".6" /><path d="M9.500 9.500l4 4M13.500 9.500l-4 4" stroke="#fff" strokeWidth="1.400" /></Icon>
            <Icon w={15} h={15} smooth><path d="M7 1.500H2v12h8v-3" stroke="#fff" strokeWidth="1.600" /><path d="M4 4h3v7H4z" fill="#fff" stroke="none" /><path d="M8 4h6v4q-1 2-3 2T8 8z" fill="#fff" stroke="#456" strokeWidth=".6" /><path d="M9.500 4V1M12.500 4V1" stroke="#fff" strokeWidth="1.400" /></Icon>
            <Icon w={17} h={13}><path d="M1 10h2v3H1zM4 8h2v5H4zM7 6h2v7H7zM10 4h2v9h-2z" fill="#fff" stroke="none" /><path d="M13.500 1.500h2v11h-2z" stroke="#dfe8f0" /></Icon>
            <Icon w={15} h={14} smooth><path d="M1 5h3l4-4v12L4 9H1z" fill="#fff" stroke="#445" strokeWidth=".6" /><path d="M10.500 4q2 3 0 6M12.500 2.500q3 4.500 0 9" stroke="#fff" /></Icon>
          </TrayItems>
          <Clock>20:34<br />22.12.2012</Clock>
          <ShowDesktop aria-label="Свернуть все окна" />
        </Tray>
      </Taskbar>
    </Shell>
  );
}
